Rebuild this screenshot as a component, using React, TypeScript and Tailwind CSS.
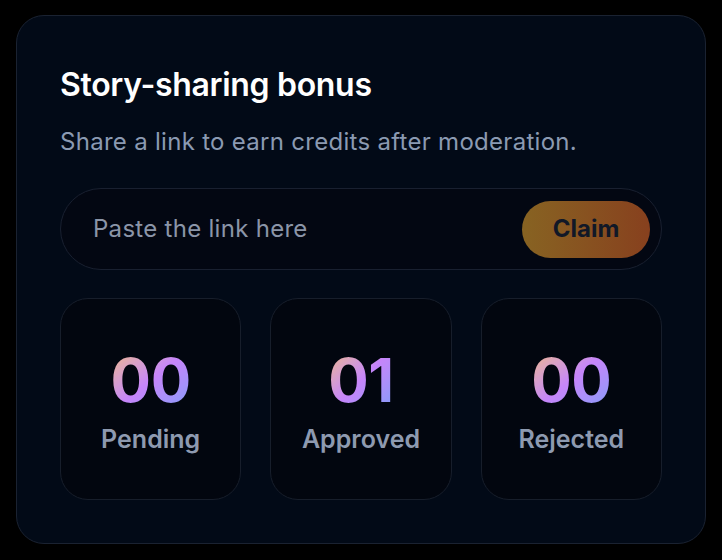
import { useState } from 'react';

const stats = [
  { value: '00', label: 'Pending' },
  { value: '01', label: 'Approved' },
  { value: '00', label: 'Rejected' },
];

export default function App() {
  const [link, setLink] = useState('');

  return (
    <div className="min-h-[560px] w-full bg-black p-[15px] pl-[16px] pr-[16px] font-['Inter',sans-serif]">
      <div className="rounded-[28px] border border-[#1a2231] bg-[#020a17] px-[43px] pb-[43px] pt-[50px]">
        <h2 className="text-[32px] font-semibold leading-[38px] tracking-[-0.01em] text-white">
          Story-sharing bonus
        </h2>
        <p className="mt-[22px] text-[24px] leading-[32px] tracking-[0.012em] text-[#8b9ab2]">
          Share a link to earn credits after moderation.
        </p>

        <div className="mt-[30px] flex h-[82px] items-center rounded-full border border-[#192030] bg-[#030712] pl-[32px] pr-[11px]">
          <input
            value={link}
            onChange={(e) => setLink(e.target.value)}
            placeholder="Paste the link here"
            className="min-w-0 flex-1 bg-transparent text-[24px] tracking-[0.012em] text-white outline-none placeholder:text-[#8b95a8]"
          />
          <button className="flex h-[57px] w-[128px] items-center justify-center rounded-full bg-gradient-to-r from-[#876322] to-[#87401e] text-[24px] font-bold text-[#111827]">
            Claim
          </button>
        </div>

        <div className="mt-[28px] grid grid-cols-3 gap-[29px]">
          {stats.map((stat) => (
            <div
              key={stat.label}
              className="flex h-[202px] flex-col items-center justify-center rounded-[28px] border border-[#171e2b] bg-[#02060f] pt-[4px]"
            >
              <span className="bg-gradient-to-br from-[#f4b977] via-[#c685fa] to-[#7c9cfa] bg-clip-text text-[60px] font-bold leading-[64px] tracking-[-0.005em] text-transparent">
                {stat.value}
              </span>
              <span className="mt-[12px] text-[25px] font-semibold leading-[30px] text-[#8e9ab0]">
                {stat.label}
              </span>
            </div>
          ))}
        </div>
      </div>
    </div>
  );
}
